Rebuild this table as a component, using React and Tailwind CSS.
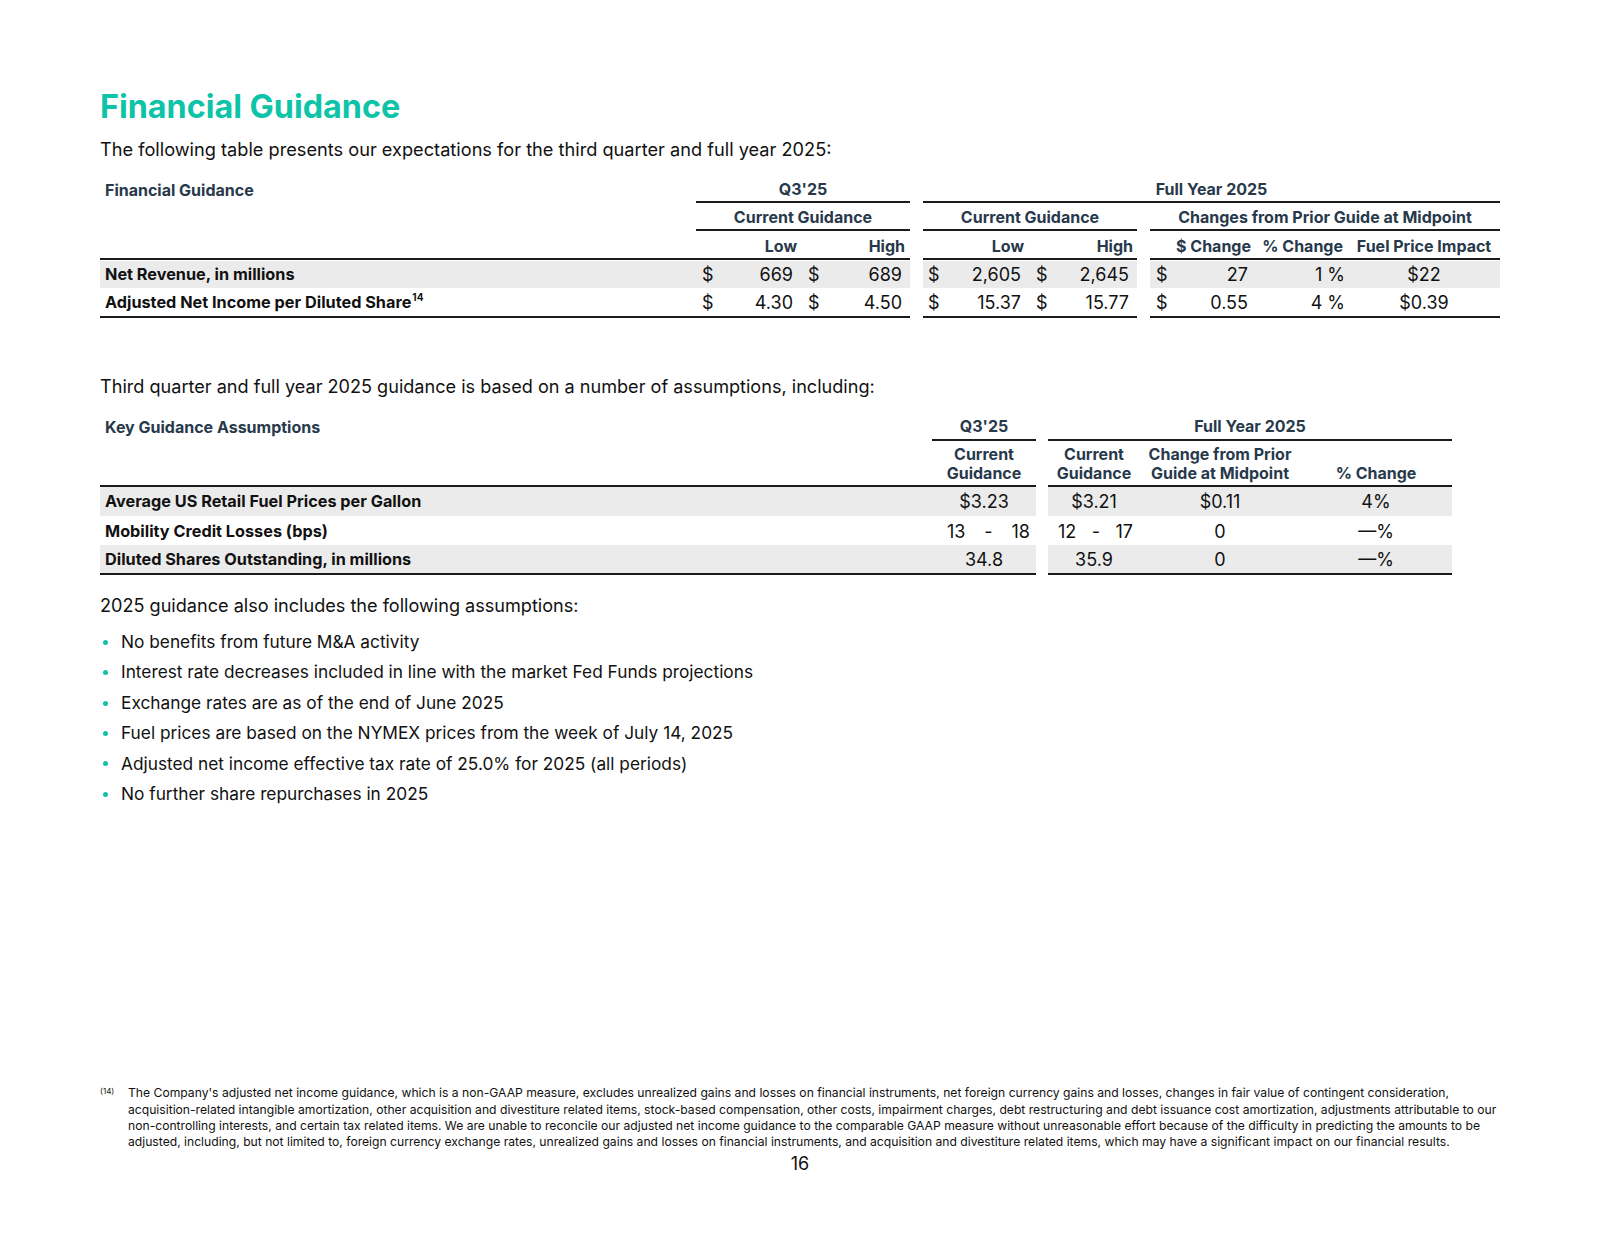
import React from 'react';

const HEAD = 'text-[#27394b] font-bold text-[16px]';
const LINE = 'border-b-2 border-[#1b1b1b]';
const GRID1 = 'grid grid-cols-[596px_107px_107px_13px_107px_107px_13px_107px_91px_152px]';
const GRID2 = 'grid grid-cols-[832px_104px_12px_92px_160px_152px]';

function Money({ v, pl, pr, cls = '' }) {
  return (
    <div className={`flex items-center justify-between ${pl} ${pr} ${cls}`}>
      <span>$</span>
      <span>{v}</span>
    </div>
  );
}

const rows1 = [
  { label: 'Net Revenue, in millions', q: ['669', '689'], fy: ['2,605', '2,645'], chg: '27', pct: '1 %', fuel: '$22', grey: true },
  { label: 'Adjusted Net Income per Diluted Share', sup: '14', q: ['4.30', '4.50'], fy: ['15.37', '15.77'], chg: '0.55', pct: '4 %', fuel: '$0.39' },
];

function GuidanceTable() {
  return (
    <div className="mt-[15px] w-[1400px]">
      <div className={`${GRID1} h-[27px] ${HEAD}`}>
        <div className="pl-[5px] flex items-center">Financial Guidance</div>
        <div className={`col-span-2 flex items-center justify-center ${LINE}`}>Q3'25</div>
        <div />
        <div className={`col-span-6 flex items-center justify-center ${LINE}`}>Full Year 2025</div>
      </div>
      <div className={`${GRID1} h-[28px] ${HEAD}`}>
        <div />
        <div className={`col-span-2 flex items-center justify-center pt-[2px] ${LINE}`}>Current Guidance</div>
        <div />
        <div className={`col-span-2 flex items-center justify-center pt-[2px] ${LINE}`}>Current Guidance</div>
        <div />
        <div className={`col-span-3 flex items-center justify-center pt-[2px] ${LINE}`}>Changes from Prior Guide at Midpoint</div>
      </div>
      <div className={`${GRID1} h-[29px] ${HEAD}`}>
        <div className={LINE} />
        <div className={`flex items-center justify-end pr-[6px] pt-[2px] ${LINE}`}>Low</div>
        <div className={`flex items-center justify-end pr-[5px] pt-[2px] ${LINE}`}>High</div>
        <div />
        <div className={`flex items-center justify-end pr-[6px] pt-[2px] ${LINE}`}>Low</div>
        <div className={`flex items-center justify-end pr-[4px] pt-[2px] ${LINE}`}>High</div>
        <div />
        <div className={`flex items-center justify-end pr-[6px] pt-[2px] ${LINE}`}>$ Change</div>
        <div className={`flex items-center justify-end pr-[5px] pt-[2px] ${LINE}`}>% Change</div>
        <div className={`flex items-center justify-center pt-[2px] ${LINE}`}>Fuel Price Impact</div>
      </div>
      {rows1.map((r, i) => {
        const bg = r.grey ? 'bg-[#ebebeb]' : '';
        const last = i === rows1.length - 1 ? LINE : '';
        const h = last ? 'h-[29px]' : 'h-[28px]';
        return (
          <div key={r.label} className={`${GRID1} ${h} text-[18px] text-[#111] pt-[1px]`}>
            <div className={`flex items-center pl-[5px] text-[16.25px] font-bold ${bg} ${last}`}>
              {r.label}
              {r.sup && <sup className="text-[10px] ml-[1px] -mt-[2px]">{r.sup}</sup>}
            </div>
            <Money v={r.q[0]} pl="pl-[6px]" pr="pr-[10px]" cls={`${bg} ${last}`} />
            <Money v={r.q[1]} pl="pl-[5px]" pr="pr-[8px]" cls={`${bg} ${last}`} />
            <div />
            <Money v={r.fy[0]} pl="pl-[5px]" pr="pr-[9px]" cls={`${bg} ${last}`} />
            <Money v={r.fy[1]} pl="pl-[6px]" pr="pr-[8px]" cls={`${bg} ${last}`} />
            <div />
            <Money v={r.chg} pl="pl-[6px]" pr="pr-[9px]" cls={`${bg} ${last}`} />
            <div className={`flex items-center justify-end pr-[3px] ${bg} ${last}`}>{r.pct}</div>
            <div className={`flex items-center justify-center ${bg} ${last}`}>{r.fuel}</div>
          </div>
        );
      })}
    </div>
  );
}

function Range({ a, b, pl, pr }) {
  return (
    <div className={`flex items-center justify-between pt-[2px] ${pl} ${pr}`}>
      <span>{a}</span>
      <span>-</span>
      <span>{b}</span>
    </div>
  );
}

function AssumptionsTable() {
  const cell = 'flex items-center justify-center';
  const body = `${GRID2} h-[29px] text-[18px] text-[#111]`;
  return (
    <div className="mt-[15px] w-[1352px]">
      <div className={`${GRID2} h-[28px] ${HEAD}`}>
        <div className="pl-[5px] flex items-center">Key Guidance Assumptions</div>
        <div className={`${cell} ${LINE}`}>Q3'25</div>
        <div />
        <div className={`col-span-3 ${cell} ${LINE}`}>Full Year 2025</div>
      </div>
      <div className={`${GRID2} h-[46px] ${HEAD} leading-[19px]`}>
        <div className={LINE} />
        <div className={`flex items-end justify-center text-center pb-[2px] ${LINE}`}>Current<br />Guidance</div>
        <div />
        <div className={`flex items-end justify-center text-center pb-[2px] ${LINE}`}>Current<br />Guidance</div>
        <div className={`flex items-end justify-center text-center pb-[2px] ${LINE}`}>Change from Prior<br />Guide at Midpoint</div>
        <div className={`flex items-end justify-center text-center pb-[2px] ${LINE}`}>% Change</div>
      </div>
      <div className={body}>
        <div className="flex items-center pl-[5px] text-[16.25px] font-bold bg-[#ebebeb]">Average US Retail Fuel Prices per Gallon</div>
        <div className={`${cell} bg-[#ebebeb]`}>$3.23</div>
        <div />
        <div className={`${cell} bg-[#ebebeb]`}>$3.21</div>
        <div className={`${cell} bg-[#ebebeb]`}>$0.11</div>
        <div className={`${cell} bg-[#ebebeb]`}>4%</div>
      </div>
      <div className={body}>
        <div className="flex items-center pl-[5px] pt-[2px] text-[16.25px] font-bold">Mobility Credit Losses (bps)</div>
        <Range a="13" b="18" pl="pl-[15px]" pr="pr-[6px]" />
        <div />
        <Range a="12" b="17" pl="pl-[10px]" pr="pr-[7px]" />
        <div className={`${cell} pt-[2px]`}>0</div>
        <div className={`${cell} pt-[2px]`}>—%</div>
      </div>
      <div className={body}>
        <div className={`flex items-center pl-[5px] pt-[1px] text-[16.25px] font-bold bg-[#ebebeb] ${LINE}`}>Diluted Shares Outstanding, in millions</div>
        <div className={`${cell} pt-[1px] bg-[#ebebeb] ${LINE}`}>34.8</div>
        <div />
        <div className={`${cell} pt-[1px] bg-[#ebebeb] ${LINE}`}>35.9</div>
        <div className={`${cell} pt-[1px] bg-[#ebebeb] ${LINE}`}>0</div>
        <div className={`${cell} pt-[1px] bg-[#ebebeb] ${LINE}`}>—%</div>
      </div>
    </div>
  );
}

const bullets = [
  'No benefits from future M&A activity',
  'Interest rate decreases included in line with the market Fed Funds projections',
  'Exchange rates are as of the end of June 2025',
  'Fuel prices are based on the NYMEX prices from the week of July 14, 2025',
  'Adjusted net income effective tax rate of 25.0% for 2025 (all periods)',
  'No further share repurchases in 2025',
];

export default function App() {
  return (
    <div className="w-[1600px] h-[1236px] bg-white px-[100px] pt-[87px] font-['Inter',sans-serif] text-[#111]">
      <h1 className="text-[32.3px] leading-[40px] font-bold text-[#0ec4a8]">Financial Guidance</h1>
      <p className="mt-[10px] text-[18.2px] leading-[24px]">
        The following table presents our expectations for the third quarter and full year 2025:
      </p>

      <GuidanceTable />

      <p className="mt-[57px] text-[18.1px] leading-[24px]">
        Third quarter and full year 2025 guidance is based on a number of assumptions, including:
      </p>

      <AssumptionsTable />

      <p className="mt-[19px] text-[18.1px] leading-[24px]">2025 guidance also includes the following assumptions:</p>
      <ul className="mt-[10px] text-[17.3px] leading-[30.4px]">
        {bullets.map(b => (
          <li key={b} className="flex items-center">
            <span className="w-[5px] h-[5px] rounded-full bg-[#0ec4a8] ml-[3px] mr-[13px]" />
            {b}
          </li>
        ))}
      </ul>

      <div className="mt-[276px] flex text-[12.15px] leading-[16.3px] text-[#111]">
        <span className="w-[28px] shrink-0 text-[8px] leading-[12px]">(14)</span>
        <p className="whitespace-nowrap">
          The Company's adjusted net income guidance, which is a non-GAAP measure, excludes unrealized gains and losses on financial instruments, net foreign currency gains and losses, changes in fair value of contingent consideration,<br />
          acquisition-related intangible amortization, other acquisition and divestiture related items, stock-based compensation, other costs, impairment charges, debt restructuring and debt issuance cost amortization, adjustments attributable to our<br />
          non-controlling interests, and certain tax related items. We are unable to reconcile our adjusted net income guidance to the comparable GAAP measure without unreasonable effort because of the difficulty in predicting the amounts to be<br />
          adjusted, including, but not limited to, foreign currency exchange rates, unrealized gains and losses on financial instruments, and acquisition and divestiture related items, which may have a significant impact on our financial results.
        </p>
      </div>
      <div className="mt-[1px] text-center text-[18px] leading-[24px]">16</div>
    </div>
  );
}
